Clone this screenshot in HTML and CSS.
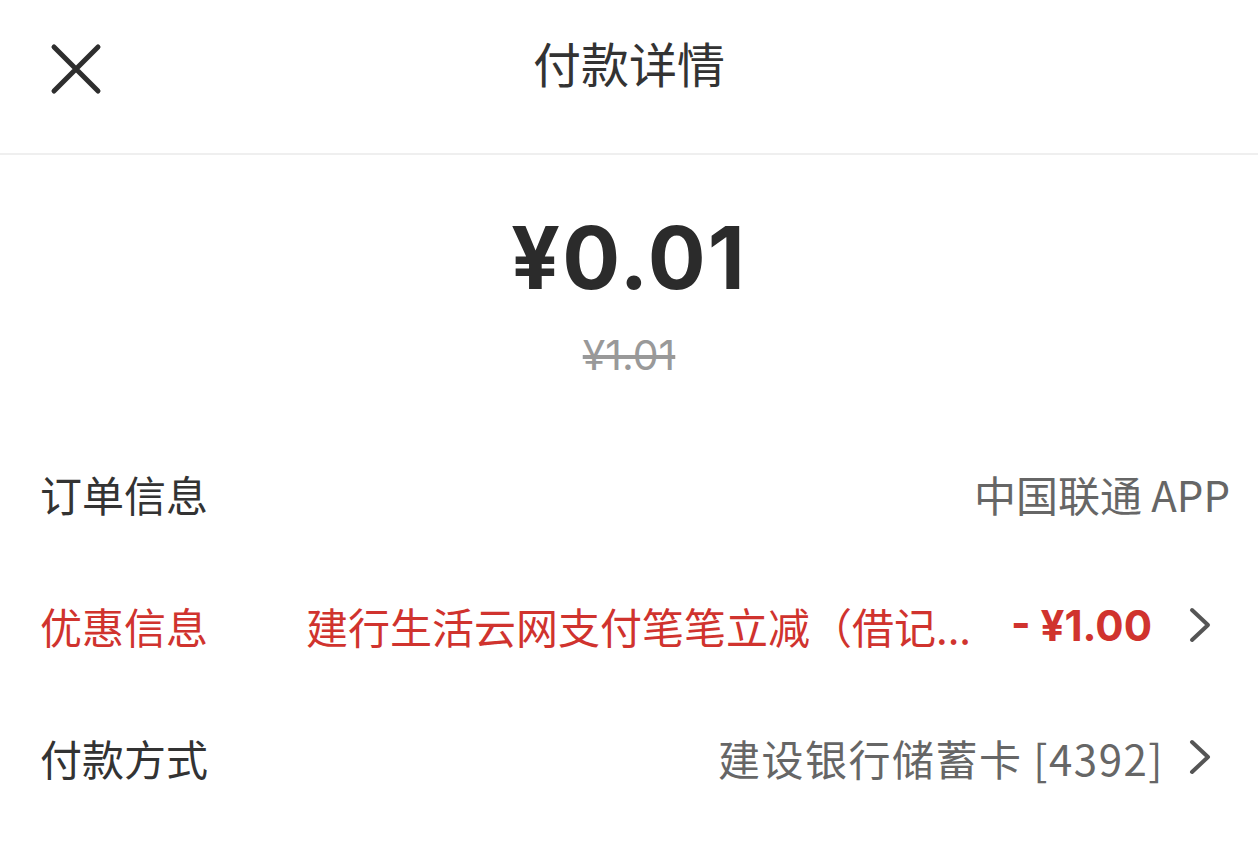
FILE: index.html
```html
<!DOCTYPE html>
<html lang="zh">
<head>
  <meta charset="UTF-8" />
  <meta name="viewport" content="width=device-width, initial-scale=1" />
  <title>付款详情</title>
  <link rel="stylesheet" href="styles.css">
</head>
<body>
  <div class="topbar">
    <div class="close">
      <svg width="52" height="52" viewBox="0 0 52 52">
        <path d="M4 4 L48 48 M48 4 L4 48" stroke="#2e2e2e" stroke-width="5" stroke-linecap="round" fill="none"/>
      </svg>
    </div>
    <div class="title">付款详情</div>
    <div></div>
  </div>

  <div class="amount-box">
    <div class="amount">¥0.01</div>
    <div class="origin">¥1.01</div>
  </div>

  <div class="rows">
    <div class="row">
      <span class="label">订单信息</span>
      <span class="value">中国联通 APP</span>
    </div>
    <div class="row red">
      <span class="label">优惠信息</span>
      <span class="discount">建行生活云网支付笔笔立减（借记...</span>
      <span class="minus">- ¥1.00</span>
      <svg class="arrow" width="24" height="38" viewBox="0 0 24 38">
        <path d="M4 4 L20 19 L4 34" stroke="#555" stroke-width="4" stroke-linecap="round" stroke-linejoin="round" fill="none"/>
      </svg>
    </div>
    <div class="row">
      <span class="label">付款方式</span>
      <span class="value card">建设银行储蓄卡 [4392]</span>
      <svg class="arrow" width="24" height="38" viewBox="0 0 24 38">
        <path d="M4 4 L20 19 L4 34" stroke="#555" stroke-width="4" stroke-linecap="round" stroke-linejoin="round" fill="none"/>
      </svg>
    </div>
  </div>
</body>
</html>
```

FILE: styles.css
```css
body {
  margin: 0;
  background: #fff;
  font-family: "Noto Sans CJK SC", "Noto Sans", sans-serif;
  color: #333;
}
.topbar {
  height: 153px;
  border-bottom: 2px solid #efefef;
  display: grid;
  grid-template-columns: 1fr auto 1fr;
  align-items: center;
}
.close { padding-left: 50px; padding-bottom: 16px; display: flex; }
.title {
  font-size: 48px;
  color: #333;
  padding-bottom: 30px;
}
.amount-box {
  text-align: center;
  padding-top: 48px;
}
.amount {
  font-family: "Inter", "Noto Sans", sans-serif;
  font-weight: 700;
  font-size: 86px;
  line-height: 110px;
  color: #2b2b2b;
  letter-spacing: 2px;
}
.origin {
  font-family: "Inter", "Noto Sans", sans-serif;
  font-size: 41px;
  line-height: 60px;
  color: #999;
  text-decoration: line-through;
  margin-top: 12px;
}
.rows { margin-top: 42px; }
.row {
  height: 132px;
  display: flex;
  align-items: center;
  padding: 0 28px 0 40px;
  font-size: 42px;
}
.label { color: #333; }
.value { margin-left: auto; color: #666; }
.value.card { letter-spacing: 1.5px; }
.row.red .label { color: #d0332e; width: 266px; flex-shrink: 0; }
.discount { color: #d0332e; white-space: nowrap; }
.minus {
  margin-left: auto;
  color: #d0332e;
  font-family: "Inter", "Noto Sans", sans-serif;
  font-weight: 700;
  font-size: 42px;
  margin-right: 36px;
}
.value + .arrow { margin-left: 24px; }
.arrow { margin-right: 18px; flex-shrink: 0; }
```
